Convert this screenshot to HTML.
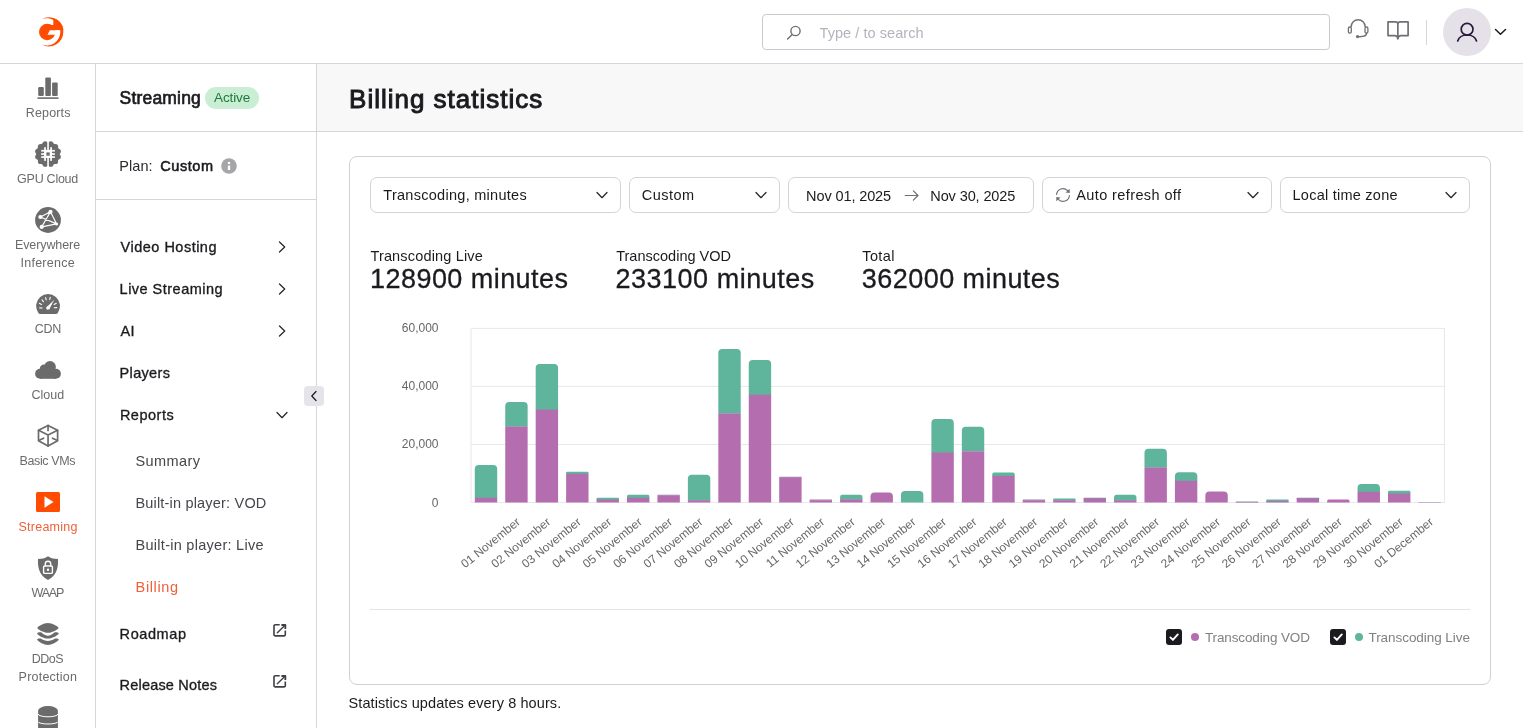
<!DOCTYPE html>
<html lang="en">
<head>
<meta charset="utf-8">
<title>Billing statistics</title>
<style>
*{box-sizing:border-box;margin:0;padding:0}
html,body{width:1523px;height:728px;overflow:hidden;background:#fff}
body{font-family:"Liberation Sans","DejaVu Sans",sans-serif;color:#1b1b1f;font-size:15px;position:relative}
#root{position:absolute;left:0;top:0;width:1523px;height:728px;will-change:transform;background:#fff}
.abs{position:absolute}
.tx{position:absolute;white-space:nowrap;z-index:3}
/* header */
#hdr{position:absolute;left:0;top:0;width:1523px;height:64px;background:#fff;border-bottom:1px solid #d5d5dc}
#search{position:absolute;left:762px;top:14px;width:568px;height:36px;border:1px solid #c9c9cf;border-radius:4px;background:#fff}
#search span{position:absolute;left:56px;top:0;line-height:35px;font-size:15px;color:#a5a5ad}
#vdiv{position:absolute;left:1426px;top:20px;width:1px;height:25px;background:#d5d5dc}
#avatar{position:absolute;left:1443px;top:8px;width:48px;height:48px;border-radius:50%;background:#e4e2e8}
/* rail */
#rail{position:absolute;left:0;top:64px;width:96px;height:664px;border-right:1px solid #d5d5dc;background:#fff}
.ri{position:absolute;left:0;width:96px;text-align:center;font-size:13.5px;line-height:18px;color:#6e6e73}
.ri svg{position:absolute;left:50%;transform:translateX(-50%)}
.ri.on{color:#f05a36}
/* side */
#side{position:absolute;left:96px;top:64px;width:221px;height:664px;border-right:1px solid #d5d5dc;background:#fff}
.sl{position:absolute;left:0;width:220px;height:1px;background:#d5d5dc}
.mi{position:absolute;left:24px;font-size:15px;font-weight:bold;line-height:20px;color:#1b1b1f;white-space:nowrap}
.si{position:absolute;left:40px;font-size:15px;line-height:20px;color:#3a3a3f;white-space:nowrap}
.chev{position:absolute;left:180px}
/* main */
#phead{position:absolute;left:317px;top:64px;width:1206px;height:68px;background:#f8f8f8;border-bottom:1px solid #d5d5dc}
#phead h1{position:absolute;left:32px;top:17px;font-size:26px;line-height:34px;font-weight:bold;color:#1b1b1f;white-space:nowrap}
#card{position:absolute;left:349px;top:156px;width:1142px;height:529px;border:1px solid #d0d0d6;border-radius:8px;background:#fff}
.sel{position:absolute;top:177px;height:36px;border:1px solid #d3d3d9;border-radius:7px;background:#fff;font-size:15px;line-height:34px;color:#1b1b1f;white-space:nowrap}
.sel .t{position:absolute;left:12px;top:0}
.sel svg.cv{position:absolute;right:11px;top:11px}
.stl{position:absolute;top:247px;font-size:15px;line-height:18px;white-space:nowrap;color:#1b1b1f}
.stv{position:absolute;top:262px;font-size:27px;line-height:34px;white-space:nowrap;color:#1b1b1f}
#foot{position:absolute;left:349px;top:694px;font-size:15px;line-height:18px;white-space:nowrap;color:#1b1b1f}
.lg{position:absolute;top:628px;font-size:14px;line-height:18px;color:#77777d;white-space:nowrap}
.cb{position:absolute;top:629px;width:16px;height:16px;border-radius:3px;background:#1b1b1f}
.dot{position:absolute;top:633px;width:8px;height:8px;border-radius:50%}
</style>
</head>
<body>
<div id="root">
<!-- HEADER -->
<div id="hdr">
  <svg class="abs" style="left:30px;top:10px" width="44" height="44" viewBox="0 0 44 44">
    <g fill="#ff4c00">
    <circle cx="17.2" cy="22.05" r="8.2"/>
    <path d="M23.3 7.9 A14.6 14.6 0 0 1 33.6 20.25 L20.5 20.25 L20.5 15 L23.3 14.9 Z"/>
    </g>
    <path d="M19.9 20.25 L31 20.25 L31 24.8 L17.5 24.8 Z" fill="#fff"/>
    <path d="M11.5 9.2 A14.6 14.6 0 1 1 11.5 34.6 A13.7 13.7 0 1 0 11.5 9.2 Z" fill="#ff4c00"/>
  </svg>
  <div id="search">
    <svg class="abs" style="left:21.5px;top:8.7px" width="18" height="18" viewBox="0 0 18 18" fill="none" stroke="#6e6e73" stroke-width="1.4" stroke-linecap="round"><circle cx="10.5" cy="7" r="4.6"/><path d="M7.2 10.4 L2.6 15"/></svg>
  </div>
  <svg class="abs" style="left:1345px;top:18px" width="26" height="26" viewBox="0 0 26 26" fill="none" stroke="#707076" stroke-width="1.5" stroke-linecap="round"><path d="M6.2 8.6 A6.9 6.9 0 0 1 20.1 8.6"/><rect x="3.4" y="9" width="2.9" height="6.2" rx="1.4" stroke-width="1.3"/><rect x="20" y="9" width="2.9" height="6.2" rx="1.4" stroke-width="1.3"/><path d="M21.5 15.6 C21.5 18 18.5 18.7 14.5 18.7"/><circle cx="12.6" cy="18.6" r="1.7" fill="#707076" stroke="none"/></svg>
  <svg class="abs" style="left:1386px;top:19px" width="24" height="24" viewBox="0 0 24 24" fill="none" stroke="#707076" stroke-width="1.7" stroke-linejoin="round"><path d="M2 2.9 H9.5 Q11.85 2.9 11.85 5 Q11.85 2.9 14.2 2.9 H22.1 V16.6 H15 Q12.3 16.6 11.85 19.8 Q11.4 16.6 8.7 16.6 H2 Z M11.85 5 V19.6"/></svg>
  <div id="vdiv"></div>
  <div id="avatar"></div>
  <svg class="abs" style="left:1454px;top:19px" width="26" height="26" viewBox="0 0 26 26" fill="none" stroke="#2a1a3a" stroke-width="1.7" stroke-linecap="round"><circle cx="13.1" cy="10.2" r="5.9"/><path d="M3.7 22 C5 17.8 9 16 13.1 16 C17.2 16 21.2 17.8 22.5 22"/></svg>
  <svg class="abs" style="left:1494px;top:28px" width="13" height="8" viewBox="0 0 13 8" fill="none" stroke="#1b1b1f" stroke-width="1.5" stroke-linecap="round" stroke-linejoin="round"><path d="M1.5 1.5 L6.5 6.3 L11.5 1.5"/></svg>
</div>

<!-- RAIL -->
<div id="rail">
<div class="ri" style="top:0px;height:66px"><svg width="28" height="28" viewBox="0 0 28 28" style="top:10px"><g fill="#6b6b6b"><rect x="4.2" y="13" width="5.6" height="9" rx="1.2"/><rect x="11.3" y="3.5" width="5.6" height="18.5" rx="1"/><rect x="18.1" y="8.5" width="5.6" height="13.5" rx="1"/><rect x="3.5" y="23.3" width="21" height="1.6"/></g></svg></div>
<div class="ri" style="top:66px;height:66px"><svg width="28" height="28" viewBox="0 0 28 28" style="top:10px"><g fill="#6b6b6b"><circle cx="14" cy="14" r="11.9"/><circle cx="24.24" cy="16.74" r="2.6"/><circle cx="21.50" cy="21.50" r="2.6"/><circle cx="16.74" cy="24.24" r="2.6"/><circle cx="11.26" cy="24.24" r="2.6"/><circle cx="6.50" cy="21.50" r="2.6"/><circle cx="3.76" cy="16.74" r="2.6"/><circle cx="3.76" cy="11.26" r="2.6"/><circle cx="6.50" cy="6.50" r="2.6"/><circle cx="11.26" cy="3.76" r="2.6"/><circle cx="16.74" cy="3.76" r="2.6"/><circle cx="21.50" cy="6.50" r="2.6"/><circle cx="24.24" cy="11.26" r="2.6"/></g><g fill="#fff"><rect x="13.25" y="0" width="1.6" height="28"/><rect x="10.2" y="9.9" width="7.7" height="8"/><rect x="10.2" y="7.2" width="1.7" height="13.7"/><rect x="16.2" y="7.2" width="1.7" height="13.7"/><rect x="7.2" y="9.9" width="13.7" height="1.7"/><rect x="7.2" y="16.2" width="13.7" height="1.7"/><rect x="7.2" y="13.2" width="13.7" height="1.7"/></g><rect x="12.4" y="12.4" width="3.3" height="3.3" fill="#6b6b6b"/></svg></div>
<div class="ri" style="top:132px;height:66px"><svg width="28" height="28" viewBox="0 0 28 28" style="top:10px"><circle cx="14" cy="14" r="12.9" fill="#6b6b6b"/><g stroke="#fff" stroke-width="1.15" fill="none" stroke-linecap="round"><path d="M16.5 5.8 L6.4 11 M16.5 5.8 L7.7 20.9 M16.5 5.8 L22.6 17.9 M6.4 11 L22.6 17.9 M7.7 20.9 L22.6 17.9"/></g><g fill="#fff"><circle cx="16.5" cy="5.8" r="2.1"/><circle cx="6.4" cy="11" r="2.1"/><circle cx="7.7" cy="20.9" r="2.1"/><circle cx="22.6" cy="17.9" r="1.5"/></g></svg></div>
<div class="ri" style="top:216px;height:66px"><svg width="28" height="28" viewBox="0 0 28 28" style="top:10px"><path d="M4.06 22.45 A11.9 11.9 0 1 1 24.04 22.45 Q23.3 23.95 21.8 23.95 H6.3 Q4.8 23.95 4.06 22.45 Z" fill="#6b6b6b"/><path d="M8.10 17.93L5.70 17.87M7.45 14.49L5.35 13.31M9.49 11.78L8.11 9.82M12.15 9.87L11.65 7.53M15.75 9.57L16.25 7.23M20.16 14.50L22.24 13.30M20.30 17.76L22.70 17.64" stroke="#fff" stroke-width="1.1" stroke-linecap="round" fill="none"/><circle cx="13.9" cy="18.1" r="1.75" fill="#fff"/><path d="M12.6 17.2 L20.2 9.7 L15.3 19.2 Z" fill="#fff"/></svg></div>
<div class="ri" style="top:282px;height:66px"><svg width="28" height="28" viewBox="0 0 28 28" style="top:10px"><g fill="#6b6b6b"><circle cx="16" cy="10.9" r="5.9"/><circle cx="10" cy="12.6" r="4.2"/><circle cx="6.1" cy="17.8" r="5"/><circle cx="21.9" cy="17.8" r="5"/><rect x="6" y="13" width="16" height="9.8"/></g></svg></div>
<div class="ri" style="top:348px;height:66px"><svg width="28" height="28" viewBox="0 0 28 28" style="top:10px"><g stroke="#6b6b6b" stroke-width="1.7" fill="none" stroke-linejoin="round" stroke-linecap="round"><path d="M14.05 3.4 L23.6 8.3 V18.7 L14.05 24.1 L4.5 18.7 V8.3 Z"/><path d="M14.05 12.95 L4.5 8.3 M14.05 12.95 L23.6 8.3 M14.05 12.95 V24.1"/><path d="M14.05 3.4 V8.5 M5.8 18.1 L9.6 16.2 M22.3 18.1 L18.5 16.2"/></g></svg></div>
<div class="ri" style="top:414px;height:66px"><svg width="28" height="28" viewBox="0 0 28 28" style="top:10px"><rect x="2" y="4" width="24" height="20" rx="1.5" fill="#ff4c00"/><path d="M10.5 8.2 L19.5 14 L10.5 19.8 Z" fill="#fff"/></svg></div>
<div class="ri" style="top:480px;height:66px"><svg width="28" height="28" viewBox="0 0 28 28" style="top:10px"><path d="M14 2.3 C16.5 4.5 20.5 5 24 5 C24.3 13 23.3 20.8 14 26 C4.7 20.8 3.7 13 4 5 C7.5 5 11.5 4.5 14 2.3Z" fill="#6b6b6b"/><g stroke="#fff" stroke-width="1.4" fill="none"><rect x="9.6" y="12" width="8.8" height="7.4" rx="1"/><path d="M11.3 12 V10 A2.7 2.7 0 0 1 16.7 10 V12"/></g><circle cx="14" cy="15.7" r="1.2" fill="#fff"/></svg></div>
<div class="ri" style="top:546px;height:66px"><svg width="28" height="28" viewBox="0 0 28 28" style="top:10px"><g fill="#6b6b6b"><path d="M3.3 7.9 C3.6 6.6 9.5 3 13.9 3 C18.3 3 24.2 6.6 24.6 7.9 C24.2 9.2 18.3 12.7 13.9 12.7 C9.5 12.7 3.6 9.2 3.3 7.9 Z"/><path d="M3.1 13.7 C4.5 15.6 10 18.6 13.9 18.6 C17.8 18.6 23.3 15.6 24.8 13.7 C24.7 12.5 22 12.1 20.4 12.4 C18.5 14.2 16 15.7 13.9 15.7 C11.8 15.7 9.3 14.2 7.5 12.4 C5.8 12.1 3.2 12.5 3.1 13.7 Z"/><path d="M3.1 19.8 C4.5 21.9 10 25 13.9 25 C17.8 25 23.3 21.9 24.8 19.8 C24.7 18.5 22.5 18.2 21.2 18.5 C19 20 16 20.9 13.9 20.9 C11.8 20.9 8.8 20 6.6 18.5 C5.3 18.2 3.2 18.5 3.1 19.8 Z"/></g></svg></div>
<div class="ri" style="top:630px;height:66px"><svg width="28" height="28" viewBox="0 0 28 28" style="top:10px"><path d="M4.1 6.5 A9.9 4.4 0 0 1 23.9 6.5 V30 H4.1 Z" fill="#6b6b6b"/><g fill="none" stroke="#fff" stroke-width="1"><path d="M4.1 10 A9.9 2.8 0 0 0 23.9 10"/><path d="M4.1 17.6 A9.9 2.4 0 0 0 23.9 17.6"/></g></svg></div>

</div>

<!-- SIDE -->
<div id="side">
<div class="abs" style="left:108.5px;top:23.3px;width:54.5px;height:21.4px;border-radius:11px;background:#caeed3"></div>
<div class="sl" style="top:67px"></div>
<svg class="abs" style="left:124.1px;top:93px" width="18" height="18" viewBox="0 0 18 18"><circle cx="9" cy="9" r="7.8" fill="#a6a6a9"/><rect x="7.85" y="4.9" width="2.3" height="2.1" rx="0.3" fill="#fff"/><rect x="7.85" y="8.6" width="2.3" height="4.4" rx="0.3" fill="#fff"/></svg>
<div class="sl" style="top:135px"></div>
<svg class="chev" style="top:176px" width="12" height="14" viewBox="0 0 12 14" fill="none" stroke="#26262b" stroke-width="1.25" stroke-linecap="round" stroke-linejoin="round"><path d="M3.5 2 L8.7 7 L3.5 12"/></svg>
<svg class="chev" style="top:218px" width="12" height="14" viewBox="0 0 12 14" fill="none" stroke="#26262b" stroke-width="1.25" stroke-linecap="round" stroke-linejoin="round"><path d="M3.5 2 L8.7 7 L3.5 12"/></svg>
<svg class="chev" style="top:260px" width="12" height="14" viewBox="0 0 12 14" fill="none" stroke="#26262b" stroke-width="1.25" stroke-linecap="round" stroke-linejoin="round"><path d="M3.5 2 L8.7 7 L3.5 12"/></svg>

<svg class="chev" style="top:345px;left:179px" width="14" height="12" viewBox="0 0 14 12" fill="none" stroke="#26262b" stroke-width="1.25" stroke-linecap="round" stroke-linejoin="round"><path d="M2 3.5 L7 8.7 L12 3.5"/></svg>
<svg class="chev" style="top:558px;left:176px" width="16" height="16" viewBox="0 0 16 16" fill="none" stroke="#404045" stroke-width="1.6" stroke-linejoin="round"><path d="M7.7 2.8 H3.2 A1.2 1.2 0 0 0 2 4 V12.7 A1.2 1.2 0 0 0 3.2 13.9 H12.1 A1.2 1.2 0 0 0 13.3 12.7 V8.45"/><path d="M9.4 3 H13.35 V6.9" stroke-width="1.8"/><path d="M5.3 10.7 L13 3.3" stroke-width="1.4" stroke-linecap="round"/></svg>
<svg class="chev" style="top:609px;left:176px" width="16" height="16" viewBox="0 0 16 16" fill="none" stroke="#404045" stroke-width="1.6" stroke-linejoin="round"><path d="M7.7 2.8 H3.2 A1.2 1.2 0 0 0 2 4 V12.7 A1.2 1.2 0 0 0 3.2 13.9 H12.1 A1.2 1.2 0 0 0 13.3 12.7 V8.45"/><path d="M9.4 3 H13.35 V6.9" stroke-width="1.8"/><path d="M5.3 10.7 L13 3.3" stroke-width="1.4" stroke-linecap="round"/></svg>
<div class="abs" style="left:208px;top:322px;width:20px;height:20px;border-radius:4px;background:#e5e4ea;z-index:5"><svg class="abs" style="left:5px;top:4px" width="10" height="12" viewBox="0 0 10 12" fill="none" stroke="#1b1b1f" stroke-width="1.2" stroke-linecap="round" stroke-linejoin="round"><path d="M7 1.5 L2.8 6 L7 10.5"/></svg></div>

</div>

<!-- MAIN -->
<div id="phead"></div>
<div id="card"></div>
<div class="sel" style="left:370px;width:251px"><svg class="cv" width="14" height="12" viewBox="0 0 14 12" fill="none" stroke="#26262b" stroke-width="1.25" stroke-linecap="round" stroke-linejoin="round"><path d="M2 3.5 L7 8.7 L12 3.5"/></svg></div>
<div class="sel" style="left:629px;width:151px"><svg class="cv" width="14" height="12" viewBox="0 0 14 12" fill="none" stroke="#26262b" stroke-width="1.25" stroke-linecap="round" stroke-linejoin="round"><path d="M2 3.5 L7 8.7 L12 3.5"/></svg></div>
<div class="sel" style="left:788px;width:246px"><svg class="abs" style="left:114px;top:11px" width="18" height="12" viewBox="0 0 18 12" fill="none" stroke="#6e6e73" stroke-width="1.2" stroke-linecap="round" stroke-linejoin="round"><path d="M2.2 6.5 H15 M10.4 1.9 L15 6.5 L10.4 11.1"/></svg></div>
<div class="sel" style="left:1042px;width:230px"><svg class="abs" style="left:12px;top:9px" width="16" height="16" viewBox="0 0 16 16" fill="none" stroke="#707076" stroke-width="1.2" stroke-linecap="round"><path d="M1.6 7.3 A6.4 6.4 0 0 1 12.4 3.4 M14.4 8.7 A6.4 6.4 0 0 1 3.6 12.6"/><path d="M14.7 1.7 V5.9 L10.5 5.6 Z M1.3 14.3 V10.1 L5.5 10.4 Z" fill="#707076" stroke="none"/></svg><svg class="cv" width="14" height="12" viewBox="0 0 14 12" fill="none" stroke="#26262b" stroke-width="1.25" stroke-linecap="round" stroke-linejoin="round"><path d="M2 3.5 L7 8.7 L12 3.5"/></svg></div>
<div class="sel" style="left:1280px;width:190px"><svg class="cv" width="14" height="12" viewBox="0 0 14 12" fill="none" stroke="#26262b" stroke-width="1.25" stroke-linecap="round" stroke-linejoin="round"><path d="M2 3.5 L7 8.7 L12 3.5"/></svg></div>

<svg class="abs" style="left:0;top:300px" width="1523" height="300" viewBox="0 300 1523 300">
<g stroke="#e8e8ea" stroke-width="1" fill="none"><rect x="471.0" y="328.4" width="973.5" height="174.10000000000002"/><path d="M471.0 386.4 H1444.5"/><path d="M471.0 444.5 H1444.5"/></g>
<path d="M474.80 498.10 V468.90 A4.00 4.00 0 0 1 478.80 464.90 H493.20 A4.00 4.00 0 0 1 497.20 468.90 V498.10 Z" fill="#5fb49c"/><rect x="474.80" y="497.80" width="22.4" height="4.70" fill="#b46eb0"/>
<path d="M505.24 426.80 V406.00 A4.00 4.00 0 0 1 509.24 402.00 H523.64 A4.00 4.00 0 0 1 527.64 406.00 V426.80 Z" fill="#5fb49c"/><rect x="505.24" y="426.50" width="22.4" height="76.00" fill="#b46eb0"/>
<path d="M535.68 409.90 V367.90 A4.00 4.00 0 0 1 539.68 363.90 H554.08 A4.00 4.00 0 0 1 558.08 367.90 V409.90 Z" fill="#5fb49c"/><rect x="535.68" y="409.60" width="22.4" height="92.90" fill="#b46eb0"/>
<path d="M566.12 474.10 V472.75 A1.05 1.05 0 0 1 567.17 471.70 H587.47 A1.05 1.05 0 0 1 588.52 472.75 V474.10 Z" fill="#5fb49c"/><rect x="566.12" y="473.80" width="22.4" height="28.70" fill="#b46eb0"/>
<path d="M596.56 499.90 V498.70 A0.90 0.90 0 0 1 597.46 497.80 H618.06 A0.90 0.90 0 0 1 618.96 498.70 V499.90 Z" fill="#5fb49c"/><rect x="596.56" y="499.60" width="22.4" height="2.90" fill="#b46eb0"/>
<path d="M627.00 498.10 V496.25 A1.55 1.55 0 0 1 628.55 494.70 H647.85 A1.55 1.55 0 0 1 649.40 496.25 V498.10 Z" fill="#5fb49c"/><rect x="627.00" y="497.80" width="22.4" height="4.70" fill="#b46eb0"/>
<path d="M657.44 495.80 V495.10 A0.40 0.40 0 0 1 657.84 494.70 H679.44 A0.40 0.40 0 0 1 679.84 495.10 V495.80 Z" fill="#9484a9"/><rect x="657.44" y="495.50" width="22.4" height="7.00" fill="#b46eb0"/>
<path d="M687.88 500.50 V478.80 A4.00 4.00 0 0 1 691.88 474.80 H706.28 A4.00 4.00 0 0 1 710.28 478.80 V500.50 Z" fill="#5fb49c"/><rect x="687.88" y="500.20" width="22.4" height="2.30" fill="#b46eb0"/>
<path d="M718.32 413.80 V353.00 A4.00 4.00 0 0 1 722.32 349.00 H736.72 A4.00 4.00 0 0 1 740.72 353.00 V413.80 Z" fill="#5fb49c"/><rect x="718.32" y="413.50" width="22.4" height="89.00" fill="#b46eb0"/>
<path d="M748.76 395.00 V364.00 A4.00 4.00 0 0 1 752.76 360.00 H767.16 A4.00 4.00 0 0 1 771.16 364.00 V395.00 Z" fill="#5fb49c"/><rect x="748.76" y="394.70" width="22.4" height="107.80" fill="#b46eb0"/>
<path d="M779.20 477.70 V477.05 A0.35 0.35 0 0 1 779.55 476.70 H801.25 A0.35 0.35 0 0 1 801.60 477.05 V477.70 Z" fill="#9484a9"/><rect x="779.20" y="477.40" width="22.4" height="25.10" fill="#b46eb0"/>
<path d="M809.64 500.50 V499.90 A0.30 0.30 0 0 1 809.94 499.60 H831.74 A0.30 0.30 0 0 1 832.04 499.90 V500.50 Z" fill="#9484a9"/><rect x="809.64" y="500.20" width="22.4" height="2.30" fill="#b46eb0"/>
<path d="M840.08 499.70 V497.05 A2.35 2.35 0 0 1 842.43 494.70 H860.13 A2.35 2.35 0 0 1 862.48 497.05 V499.70 Z" fill="#5fb49c"/><rect x="840.08" y="499.40" width="22.4" height="3.10" fill="#b46eb0"/>
<path d="M870.52 502.50 V496.40 A4.00 4.00 0 0 1 874.52 492.40 H888.92 A4.00 4.00 0 0 1 892.92 496.40 V502.50 Z" fill="#b46eb0"/>
<path d="M900.96 502.50 V495.00 A4.00 4.00 0 0 1 904.96 491.00 H919.36 A4.00 4.00 0 0 1 923.36 495.00 V502.50 Z" fill="#5fb49c"/>
<path d="M931.40 452.90 V423.00 A4.00 4.00 0 0 1 935.40 419.00 H949.80 A4.00 4.00 0 0 1 953.80 423.00 V452.90 Z" fill="#5fb49c"/><rect x="931.40" y="452.60" width="22.4" height="49.90" fill="#b46eb0"/>
<path d="M961.84 451.60 V430.80 A4.00 4.00 0 0 1 965.84 426.80 H980.24 A4.00 4.00 0 0 1 984.24 430.80 V451.60 Z" fill="#5fb49c"/><rect x="961.84" y="451.30" width="22.4" height="51.20" fill="#b46eb0"/>
<path d="M992.28 476.20 V474.20 A1.70 1.70 0 0 1 993.98 472.50 H1012.98 A1.70 1.70 0 0 1 1014.68 474.20 V476.20 Z" fill="#5fb49c"/><rect x="992.28" y="475.90" width="22.4" height="26.60" fill="#b46eb0"/>
<path d="M1022.72 500.70 V500.00 A0.40 0.40 0 0 1 1023.12 499.60 H1044.72 A0.40 0.40 0 0 1 1045.12 500.00 V500.70 Z" fill="#9484a9"/><rect x="1022.72" y="500.40" width="22.4" height="2.10" fill="#b46eb0"/>
<path d="M1053.16 500.50 V499.40 A0.80 0.80 0 0 1 1053.96 498.60 H1074.76 A0.80 0.80 0 0 1 1075.56 499.40 V500.50 Z" fill="#5fb49c"/><rect x="1053.16" y="500.20" width="22.4" height="2.30" fill="#b46eb0"/>
<path d="M1083.60 499.20 V498.35 A0.55 0.55 0 0 1 1084.15 497.80 H1105.45 A0.55 0.55 0 0 1 1106.00 498.35 V499.20 Z" fill="#9484a9"/><rect x="1083.60" y="498.90" width="22.4" height="3.60" fill="#b46eb0"/>
<path d="M1114.04 500.50 V497.45 A2.75 2.75 0 0 1 1116.79 494.70 H1133.69 A2.75 2.75 0 0 1 1136.44 497.45 V500.50 Z" fill="#5fb49c"/><rect x="1114.04" y="500.20" width="22.4" height="2.30" fill="#b46eb0"/>
<path d="M1144.48 467.80 V452.70 A4.00 4.00 0 0 1 1148.48 448.70 H1162.88 A4.00 4.00 0 0 1 1166.88 452.70 V467.80 Z" fill="#5fb49c"/><rect x="1144.48" y="467.50" width="22.4" height="35.00" fill="#b46eb0"/>
<path d="M1174.92 481.10 V476.20 A4.00 4.00 0 0 1 1178.92 472.20 H1193.32 A4.00 4.00 0 0 1 1197.32 476.20 V481.10 Z" fill="#5fb49c"/><rect x="1174.92" y="480.80" width="22.4" height="21.70" fill="#b46eb0"/>
<path d="M1205.36 502.50 V495.50 A4.00 4.00 0 0 1 1209.36 491.50 H1223.76 A4.00 4.00 0 0 1 1227.76 495.50 V502.50 Z" fill="#b46eb0"/>
<path d="M1235.80 502.50 V501.85 A0.35 0.35 0 0 1 1236.15 501.50 H1257.85 A0.35 0.35 0 0 1 1258.20 501.85 V502.50 Z" fill="#9484a9"/><rect x="1235.80" y="502.20" width="22.4" height="0.30" fill="#b46eb0"/>
<path d="M1266.24 501.30 V500.30 A0.70 0.70 0 0 1 1266.94 499.60 H1287.94 A0.70 0.70 0 0 1 1288.64 500.30 V501.30 Z" fill="#5fb49c"/><rect x="1266.24" y="501.00" width="22.4" height="1.50" fill="#b46eb0"/>
<path d="M1296.68 499.20 V498.35 A0.55 0.55 0 0 1 1297.23 497.80 H1318.53 A0.55 0.55 0 0 1 1319.08 498.35 V499.20 Z" fill="#9484a9"/><rect x="1296.68" y="498.90" width="22.4" height="3.60" fill="#b46eb0"/>
<path d="M1327.12 502.50 V500.95 A1.55 1.55 0 0 1 1328.67 499.40 H1347.97 A1.55 1.55 0 0 1 1349.52 500.95 V502.50 Z" fill="#b46eb0"/>
<path d="M1357.56 492.10 V487.90 A3.90 3.90 0 0 1 1361.46 484.00 H1376.06 A3.90 3.90 0 0 1 1379.96 487.90 V492.10 Z" fill="#5fb49c"/><rect x="1357.56" y="491.80" width="22.4" height="10.70" fill="#b46eb0"/>
<path d="M1388.00 493.90 V492.20 A1.40 1.40 0 0 1 1389.40 490.80 H1409.00 A1.40 1.40 0 0 1 1410.40 492.20 V493.90 Z" fill="#5fb49c"/><rect x="1388.00" y="493.60" width="22.4" height="8.90" fill="#b46eb0"/>
<path d="M1418.44 502.50 V502.20 A0.30 0.30 0 0 1 1418.74 501.90 H1440.54 A0.30 0.30 0 0 1 1440.84 502.20 V502.50 Z" fill="#9484a9"/>
<g font-family="Liberation Sans, Arial, sans-serif" font-size="12" fill="#666" text-anchor="end"><text x="438.5" y="331.6">60,000</text><text x="438.5" y="389.6">40,000</text><text x="438.5" y="447.6">20,000</text><text x="438.5" y="506.7">0</text></g>
<g font-family="Liberation Sans, Arial, sans-serif" font-size="12" fill="#666" text-anchor="end"><text transform="translate(518.3 520.0) rotate(-39)" x="0" y="4.2">01 November</text><text transform="translate(548.7 520.0) rotate(-39)" x="0" y="4.2">02 November</text><text transform="translate(579.2 520.0) rotate(-39)" x="0" y="4.2">03 November</text><text transform="translate(609.6 520.0) rotate(-39)" x="0" y="4.2">04 November</text><text transform="translate(640.1 520.0) rotate(-39)" x="0" y="4.2">05 November</text><text transform="translate(670.5 520.0) rotate(-39)" x="0" y="4.2">06 November</text><text transform="translate(700.9 520.0) rotate(-39)" x="0" y="4.2">07 November</text><text transform="translate(731.4 520.0) rotate(-39)" x="0" y="4.2">08 November</text><text transform="translate(761.8 520.0) rotate(-39)" x="0" y="4.2">09 November</text><text transform="translate(792.3 520.0) rotate(-39)" x="0" y="4.2">10 November</text><text transform="translate(822.7 520.0) rotate(-39)" x="0" y="4.2">11 November</text><text transform="translate(853.1 520.0) rotate(-39)" x="0" y="4.2">12 November</text><text transform="translate(883.6 520.0) rotate(-39)" x="0" y="4.2">13 November</text><text transform="translate(914.0 520.0) rotate(-39)" x="0" y="4.2">14 November</text><text transform="translate(944.5 520.0) rotate(-39)" x="0" y="4.2">15 November</text><text transform="translate(974.9 520.0) rotate(-39)" x="0" y="4.2">16 November</text><text transform="translate(1005.3 520.0) rotate(-39)" x="0" y="4.2">17 November</text><text transform="translate(1035.8 520.0) rotate(-39)" x="0" y="4.2">18 November</text><text transform="translate(1066.2 520.0) rotate(-39)" x="0" y="4.2">19 November</text><text transform="translate(1096.7 520.0) rotate(-39)" x="0" y="4.2">20 November</text><text transform="translate(1127.1 520.0) rotate(-39)" x="0" y="4.2">21 November</text><text transform="translate(1157.5 520.0) rotate(-39)" x="0" y="4.2">22 November</text><text transform="translate(1188.0 520.0) rotate(-39)" x="0" y="4.2">23 November</text><text transform="translate(1218.4 520.0) rotate(-39)" x="0" y="4.2">24 November</text><text transform="translate(1248.9 520.0) rotate(-39)" x="0" y="4.2">25 November</text><text transform="translate(1279.3 520.0) rotate(-39)" x="0" y="4.2">26 November</text><text transform="translate(1309.7 520.0) rotate(-39)" x="0" y="4.2">27 November</text><text transform="translate(1340.2 520.0) rotate(-39)" x="0" y="4.2">28 November</text><text transform="translate(1370.6 520.0) rotate(-39)" x="0" y="4.2">29 November</text><text transform="translate(1401.1 520.0) rotate(-39)" x="0" y="4.2">30 November</text><text transform="translate(1431.5 520.0) rotate(-39)" x="0" y="4.2">01 December</text></g>
</svg>

<div class="abs" style="left:370px;top:609px;width:1100px;height:1px;background:#e3e3e6"></div>
<div class="cb" style="left:1166px"><svg class="abs" style="left:2px;top:2px" width="12" height="12" viewBox="0 0 12 12" fill="none" stroke="#fff" stroke-width="1.9" stroke-linecap="round" stroke-linejoin="round"><path d="M2.4 6.4 L4.9 8.9 L9.8 3.4"/></svg></div><div class="dot" style="left:1191px;background:#b46eb0"></div>
<div class="cb" style="left:1330px"><svg class="abs" style="left:2px;top:2px" width="12" height="12" viewBox="0 0 12 12" fill="none" stroke="#fff" stroke-width="1.9" stroke-linecap="round" stroke-linejoin="round"><path d="M2.4 6.4 L4.9 8.9 L9.8 3.4"/></svg></div><div class="dot" style="left:1355px;background:#5fb49c"></div>

<div class="tx" style="left:25.8px;top:102.9px;font-size:12.5px;line-height:20px;font-weight:normal;letter-spacing:0.15px;color:#6b6b6b">Reports</div>
<div class="tx" style="left:17.1px;top:168.7px;font-size:12.5px;line-height:20px;font-weight:normal;letter-spacing:-0.26px;color:#6b6b6b">GPU Cloud</div>
<div class="tx" style="left:14.9px;top:234.9px;font-size:12.5px;line-height:20px;font-weight:normal;letter-spacing:-0.09px;color:#6b6b6b">Everywhere</div>
<div class="tx" style="left:20.5px;top:252.7px;font-size:12.5px;line-height:20px;font-weight:normal;letter-spacing:0.25px;color:#6b6b6b">Inference</div>
<div class="tx" style="left:34.7px;top:318.7px;font-size:12.5px;line-height:20px;font-weight:normal;letter-spacing:-0.25px;color:#6b6b6b">CDN</div>
<div class="tx" style="left:31.5px;top:384.7px;font-size:12.5px;line-height:20px;font-weight:normal;letter-spacing:0.00px;color:#6b6b6b">Cloud</div>
<div class="tx" style="left:19.6px;top:450.7px;font-size:12.5px;line-height:20px;font-weight:normal;letter-spacing:-0.39px;color:#6b6b6b">Basic VMs</div>
<div class="tx" style="left:18.5px;top:516.7px;font-size:12.5px;line-height:20px;font-weight:normal;letter-spacing:0.24px;color:#f0603a">Streaming</div>
<div class="tx" style="left:31.5px;top:582.8px;font-size:12.5px;line-height:20px;font-weight:normal;letter-spacing:-1.17px;color:#6b6b6b">WAAP</div>
<div class="tx" style="left:31.8px;top:649.0px;font-size:12.5px;line-height:20px;font-weight:normal;letter-spacing:-0.50px;color:#6b6b6b">DDoS</div>
<div class="tx" style="left:18.6px;top:666.8px;font-size:12.5px;line-height:20px;font-weight:normal;letter-spacing:0.23px;color:#6b6b6b">Protection</div>
<div class="tx" style="left:119.6px;top:87.8px;font-size:17.5px;line-height:20px;font-weight:normal;letter-spacing:0.18px;color:#1b1b1f;-webkit-text-stroke:0.67px #1b1b1f">Streaming</div>
<div class="tx" style="left:214.0px;top:88.2px;font-size:13.5px;line-height:20px;font-weight:normal;letter-spacing:-0.10px;color:#1c7a3b">Active</div>
<div class="tx" style="left:119.3px;top:156.3px;font-size:14.5px;line-height:20px;font-weight:normal;letter-spacing:0.07px;color:#2a2a30">Plan:</div>
<div class="tx" style="left:160.2px;top:155.9px;font-size:14.5px;line-height:20px;font-weight:normal;letter-spacing:0.59px;color:#1b1b1f;-webkit-text-stroke:0.55px #1b1b1f">Custom</div>
<div class="tx" style="left:120.6px;top:237.4px;font-size:14.5px;line-height:20px;font-weight:normal;letter-spacing:0.49px;color:#1b1b1f;-webkit-text-stroke:0.33px #1b1b1f">Video Hosting</div>
<div class="tx" style="left:119.6px;top:279.4px;font-size:14.5px;line-height:20px;font-weight:normal;letter-spacing:0.48px;color:#1b1b1f;-webkit-text-stroke:0.33px #1b1b1f">Live Streaming</div>
<div class="tx" style="left:120.6px;top:321.4px;font-size:14.5px;line-height:20px;font-weight:normal;letter-spacing:0.27px;color:#1b1b1f;-webkit-text-stroke:0.33px #1b1b1f">AI</div>
<div class="tx" style="left:119.6px;top:363.4px;font-size:14.5px;line-height:20px;font-weight:normal;letter-spacing:0.33px;color:#1b1b1f;-webkit-text-stroke:0.33px #1b1b1f">Players</div>
<div class="tx" style="left:119.9px;top:405.2px;font-size:14.5px;line-height:20px;font-weight:normal;letter-spacing:0.51px;color:#1b1b1f;-webkit-text-stroke:0.33px #1b1b1f">Reports</div>
<div class="tx" style="left:119.6px;top:624.1px;font-size:14.5px;line-height:20px;font-weight:normal;letter-spacing:0.58px;color:#1b1b1f;-webkit-text-stroke:0.33px #1b1b1f">Roadmap</div>
<div class="tx" style="left:119.6px;top:675.0px;font-size:14.5px;line-height:20px;font-weight:normal;letter-spacing:0.19px;color:#1b1b1f;-webkit-text-stroke:0.33px #1b1b1f">Release Notes</div>
<div class="tx" style="left:135.4px;top:451.0px;font-size:14.5px;line-height:20px;font-weight:normal;letter-spacing:0.42px;color:#46464c">Summary</div>
<div class="tx" style="left:135.4px;top:493.0px;font-size:14.5px;line-height:20px;font-weight:normal;letter-spacing:0.19px;color:#46464c">Built-in player: VOD</div>
<div class="tx" style="left:135.6px;top:535.0px;font-size:14.5px;line-height:20px;font-weight:normal;letter-spacing:0.27px;color:#46464c">Built-in player: Live</div>
<div class="tx" style="left:135.6px;top:577.2px;font-size:14.5px;line-height:20px;font-weight:normal;letter-spacing:0.63px;color:#f0603a">Billing</div>
<div class="tx" style="left:349.1px;top:81.7px;font-size:26px;line-height:34px;font-weight:normal;letter-spacing:0.99px;color:#1b1b1f;-webkit-text-stroke:0.99px #1b1b1f">Billing statistics</div>
<div class="tx" style="left:383.3px;top:185.4px;font-size:14.5px;line-height:20px;font-weight:normal;letter-spacing:0.28px;color:#1b1b1f">Transcoding, minutes</div>
<div class="tx" style="left:641.7px;top:185.4px;font-size:14.5px;line-height:20px;font-weight:normal;letter-spacing:0.48px;color:#1b1b1f">Custom</div>
<div class="tx" style="left:806.1px;top:185.6px;font-size:14.5px;line-height:20px;font-weight:normal;letter-spacing:-0.11px;color:#1b1b1f">Nov 01, 2025</div>
<div class="tx" style="left:930.3px;top:185.6px;font-size:14.5px;line-height:20px;font-weight:normal;letter-spacing:-0.11px;color:#1b1b1f">Nov 30, 2025</div>
<div class="tx" style="left:1076.2px;top:185.4px;font-size:14.5px;line-height:20px;font-weight:normal;letter-spacing:0.40px;color:#1b1b1f">Auto refresh off</div>
<div class="tx" style="left:1292.5px;top:185.2px;font-size:14.5px;line-height:20px;font-weight:normal;letter-spacing:0.25px;color:#1b1b1f">Local time zone</div>
<div class="tx" style="left:370.4px;top:246.1px;font-size:14.5px;line-height:20px;font-weight:normal;letter-spacing:0.17px;color:#1b1b1f">Transcoding Live</div>
<div class="tx" style="left:370.1px;top:262.2px;font-size:27px;line-height:34px;font-weight:normal;letter-spacing:0.44px;color:#1b1b1f;-webkit-text-stroke:0.30px #1b1b1f">128900 minutes</div>
<div class="tx" style="left:616.2px;top:246.1px;font-size:14.5px;line-height:20px;font-weight:normal;letter-spacing:0.01px;color:#1b1b1f">Transcoding VOD</div>
<div class="tx" style="left:615.4px;top:262.2px;font-size:27px;line-height:34px;font-weight:normal;letter-spacing:0.52px;color:#1b1b1f;-webkit-text-stroke:0.30px #1b1b1f">233100 minutes</div>
<div class="tx" style="left:862.3px;top:246.1px;font-size:14.5px;line-height:20px;font-weight:normal;letter-spacing:0.38px;color:#1b1b1f">Total</div>
<div class="tx" style="left:861.8px;top:262.2px;font-size:27px;line-height:34px;font-weight:normal;letter-spacing:0.45px;color:#1b1b1f;-webkit-text-stroke:0.30px #1b1b1f">362000 minutes</div>
<div class="tx" style="left:1204.9px;top:627.8px;font-size:13.5px;line-height:20px;font-weight:normal;letter-spacing:-0.12px;color:#808086">Transcoding VOD</div>
<div class="tx" style="left:1368.5px;top:627.8px;font-size:13.5px;line-height:20px;font-weight:normal;letter-spacing:-0.06px;color:#808086">Transcoding Live</div>
<div class="tx" style="left:348.5px;top:692.8px;font-size:14.5px;line-height:20px;font-weight:normal;letter-spacing:0.10px;color:#1b1b1f">Statistics updates every 8 hours.</div>
<div class="tx" style="left:819.6px;top:22.8px;font-size:14.5px;line-height:20px;font-weight:normal;letter-spacing:0.05px;color:#b3b3be">Type / to search</div>

</div>
</body>
</html>
